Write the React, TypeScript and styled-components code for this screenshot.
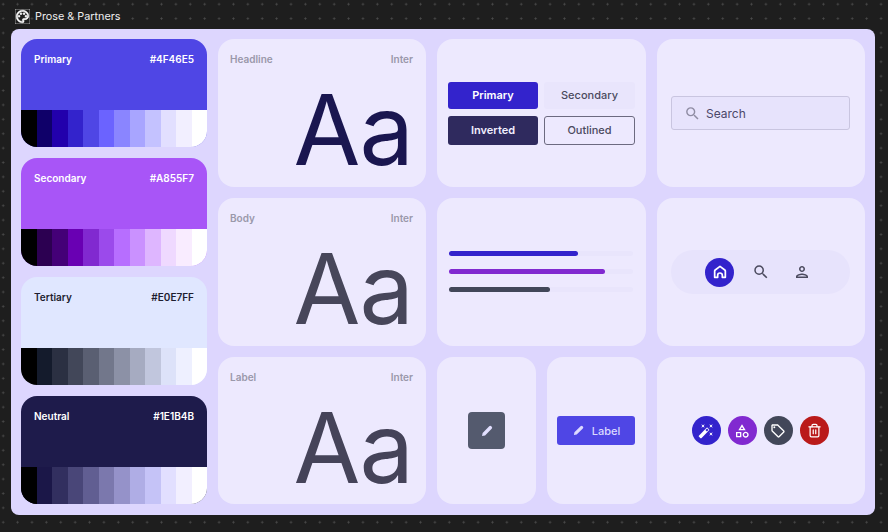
import styled, { createGlobalStyle } from "styled-components";
import { Trash2 } from "lucide-react";
import {
  MdAutoFixHigh,
  MdOutlineCategory,
  MdOutlinePalette,
  MdOutlinePerson,
  MdOutlineSell,
  MdSearch,
} from "react-icons/md";

const GlobalStyle = createGlobalStyle`
  html, body {
    margin: 0;
    padding: 0;
    width: 888px;
    height: 532px;
    overflow: hidden;
    font-family: Inter, "Liberation Sans", sans-serif;
  }
  * {
    box-sizing: border-box;
  }
`;

const Canvas = styled.div`
  width: 888px;
  height: 532px;
  padding: 0 13px 17px 11px;
  display: flex;
  flex-direction: column;
  background-color: #1e1e1e;
  background-image: radial-gradient(circle, #4a4a4a 0.9px, transparent 1.1px);
  background-size: 14.4px 14.4px;
  background-position: -4px -3px;
`;

const FrameLabel = styled.header`
  height: 29px;
  display: flex;
  align-items: center;
  gap: 5px;
  padding: 4px 0 0 4px;
  color: #ededed;
  font-size: 10.8px;
  svg {
    color: #fff;
    stroke: currentColor;
    stroke-width: 0.9px;
  }
`;

const Panel = styled.main`
  flex: 1;
  padding: 10px;
  background: #ddd6fe;
  border-radius: 8px;
  display: grid;
  grid-template-columns: 186px 208px 209px 208px;
  grid-template-rows: 148px 148px 147px;
  gap: 11px;
`;

const PaletteColumn = styled.div`
  grid-row: 1 / span 3;
  display: flex;
  flex-direction: column;
  gap: 11px;
`;

const PaletteCard = styled.div<{ $bg: string; $fg: string }>`
  height: 108px;
  border-radius: 16px;
  overflow: hidden;
  display: flex;
  flex-direction: column;
  background: ${(p) => p.$bg};
  color: ${(p) => p.$fg};
`;

const PaletteHead = styled.div`
  flex: 1;
  padding: 14px 13px 0;
  display: flex;
  justify-content: space-between;
  font-size: 10px;
  line-height: 13px;
  font-weight: 600;
`;

const Tones = styled.div`
  height: 37px;
  display: grid;
  grid-template-columns: repeat(12, 1fr);
`;

const Tone = styled.div<{ $c: string }>`
  background: ${(p) => p.$c};
`;

const Card = styled.section`
  background: #ede9fe;
  border-radius: 16px;
  min-width: 0;
`;

const TypeCard = styled(Card)`
  padding: 14px 13px 0 12px;
  display: flex;
  flex-direction: column;
`;

const TypeHead = styled.div`
  display: flex;
  justify-content: space-between;
  font-size: 10px;
  line-height: 13px;
  font-weight: 600;
  color: #9a98aa;
`;

const Sample = styled.div<{ $c: string }>`
  text-align: right;
  font-size: 97px;
  line-height: 97px;
  margin-top: 15px;
  letter-spacing: -1px;
  color: ${(p) => p.$c};
`;

const ButtonsCard = styled(Card)`
  padding: 0 11px;
  display: grid;
  grid-template-columns: 90px 91px;
  grid-template-rows: 27px 29px;
  column-gap: 6px;
  row-gap: 7px;
  align-content: center;
`;

const Btn = styled.div<{ $bg: string; $fg: string; $line?: string; $strong?: boolean }>`
  display: flex;
  align-items: center;
  justify-content: center;
  font-size: 11px;
  font-weight: ${(p) => (p.$strong ? 600 : 500)};
  border-radius: 3px;
  background: ${(p) => p.$bg};
  color: ${(p) => p.$fg};
  border: ${(p) => (p.$line ? `1px solid ${p.$line}` : "none")};
`;

const CenterCard = styled(Card)`
  display: flex;
  align-items: center;
  justify-content: center;
`;

const SearchBox = styled.div`
  width: 179px;
  height: 34px;
  margin-right: 1px;
  padding-left: 12px;
  display: flex;
  align-items: center;
  gap: 5px;
  background: #e7e3fc;
  border: 1px solid #c9c5e0;
  border-radius: 3px;
  color: #4b4869;
  font-size: 12px;
  svg {
    color: #8f8ca3;
  }
`;

const BarStack = styled(Card)`
  padding: 0 13px 2px 12px;
  display: flex;
  flex-direction: column;
  justify-content: center;
  gap: 13px;
`;

const Track = styled.div`
  height: 5px;
  border-radius: 3px;
  background: #e9e5fc;
`;

const Fill = styled.div<{ $c: string }>`
  height: 100%;
  border-radius: 3px;
  background: ${(p) => p.$c};
`;

const NavPill = styled.nav`
  width: 179px;
  height: 44px;
  margin-right: 1px;
  border-radius: 22px;
  background: #e7e3fc;
  display: flex;
  align-items: center;
  justify-content: center;
  gap: 12px;
`;

const NavItem = styled.div<{ $active?: boolean }>`
  width: 29px;
  height: 29px;
  border-radius: 50%;
  display: flex;
  align-items: center;
  justify-content: center;
  background: ${(p) => (p.$active ? "#3323cc" : "transparent")};
  color: ${(p) => (p.$active ? "#fff" : "#4b4a5e")};
`;

const SplitCell = styled.div`
  display: grid;
  grid-template-columns: 99px 99px;
  gap: 11px;
`;

const IconSquare = styled.div`
  width: 37px;
  height: 37px;
  border-radius: 4px;
  background: #545a6e;
  color: #e2dfff;
  display: flex;
  align-items: center;
  justify-content: center;
`;

const LabelButton = styled.div`
  width: 78px;
  height: 29px;
  margin-right: 1px;
  border-radius: 3px;
  background: #4f46e5;
  color: #dcd9ff;
  font-size: 11px;
  font-weight: 500;
  display: flex;
  align-items: center;
  justify-content: center;
  gap: 7px;
`;

const FabRow = styled.div`
  display: flex;
  gap: 7px;
  margin-right: 2px;
`;

const Fab = styled.div<{ $c: string }>`
  width: 29px;
  height: 29px;
  border-radius: 50%;
  background: ${(p) => p.$c};
  color: #fff;
  display: flex;
  align-items: center;
  justify-content: center;
`;

const palettes = [
  {
    name: "Primary",
    hex: "#4F46E5",
    bg: "#4f46e5",
    fg: "#ffffff",
    tones: ["#000000", "#0f0069", "#2200ac", "#3323cc", "#4f46e5", "#6b63ff", "#8a85ff", "#a8a5ff", "#c4c2ff", "#e2dfff", "#f2efff", "#ffffff"],
  },
  {
    name: "Secondary",
    hex: "#A855F7",
    bg: "#a855f7",
    fg: "#ffffff",
    tones: ["#000000", "#2c0051", "#440077", "#6900b3", "#8129d0", "#9b4aeb", "#b76eff", "#ca91ff", "#deb6ff", "#efd9ff", "#f9ecff", "#ffffff"],
  },
  {
    name: "Tertiary",
    hex: "#E0E7FF",
    bg: "#e0e7ff",
    fg: "#1e1e30",
    tones: ["#000000", "#141b2c", "#2b3042", "#424759", "#5a5f72", "#72778b", "#8c91a6", "#a6abc1", "#c1c6dd", "#dde2f9", "#eef0ff", "#ffffff"],
  },
  {
    name: "Neutral",
    hex: "#1E1B4B",
    bg: "#1e1b4b",
    fg: "#ffffff",
    tones: ["#000000", "#1b1748", "#322f5f", "#494678", "#615e92", "#7b78ad", "#9592c9", "#afade5", "#c5c3f7", "#e2dfff", "#f2efff", "#ffffff"],
  },
];

const bars = [
  { c: "#3323cc", pct: 70 },
  { c: "#8129d0", pct: 85 },
  { c: "#424759", pct: 55 },
];

const samples = [
  { label: "Headline", c: "#1a1650" },
  { label: "Body", c: "#47465a" },
  { label: "Label", c: "#454359" },
];

function HomeIcon() {
  return (
    <svg width="16" height="16" viewBox="0 0 24 24" fill="none" stroke="currentColor" strokeWidth="2.6" strokeLinejoin="round" strokeLinecap="round">
      <path d="M4 20V10.5c0-.6.3-1.1.8-1.5L12 3.5 19.2 9c.5.4.8.9.8 1.5V20h-4.5v-3a3.5 3.5 0 0 0-7 0v3Z" />
    </svg>
  );
}

function PencilIcon({ size }: { size: number }) {
  return (
    <svg width={size} height={size} viewBox="0 0 24 24" fill="currentColor">
      <path d="M3.5 20.5l1-5.2L15.8 4a2.6 2.6 0 0 1 3.7 0l.5.5a2.6 2.6 0 0 1 0 3.7L8.7 19.5Z" />
      <path d="M7.5 16.5 16 8" stroke="#ffffff" strokeOpacity=".25" strokeWidth="1" fill="none" />
    </svg>
  );
}

function TypeSample({ label, c }: { label: string; c: string }) {
  return (
    <TypeCard>
      <TypeHead>
        <span>{label}</span>
        <span>Inter</span>
      </TypeHead>
      <Sample $c={c}>Aa</Sample>
    </TypeCard>
  );
}

export default function App() {
  return (
    <>
      <GlobalStyle />
      <Canvas>
        <FrameLabel>
          <MdOutlinePalette size={15} />
          Prose &amp; Partners
        </FrameLabel>
        <Panel>
          <PaletteColumn>
            {palettes.map((p) => (
              <PaletteCard key={p.name} $bg={p.bg} $fg={p.fg}>
                <PaletteHead>
                  <span>{p.name}</span>
                  <span>{p.hex}</span>
                </PaletteHead>
                <Tones>
                  {p.tones.map((t, i) => (
                    <Tone key={i} $c={t} />
                  ))}
                </Tones>
              </PaletteCard>
            ))}
          </PaletteColumn>

          <TypeSample {...samples[0]} />
          <ButtonsCard>
            <Btn $bg="#3323cc" $fg="#ffffff" $strong>Primary</Btn>
            <Btn $bg="#e9e5fc" $fg="#4b4a5e">Secondary</Btn>
            <Btn $bg="#2f2a5e" $fg="#f2efff" $strong>Inverted</Btn>
            <Btn $bg="transparent" $fg="#4b4a5e" $line="#6c6a80">Outlined</Btn>
          </ButtonsCard>
          <CenterCard>
            <SearchBox>
              <MdSearch size={17} />
              Search
            </SearchBox>
          </CenterCard>

          <TypeSample {...samples[1]} />
          <BarStack>
            {bars.map((b) => (
              <Track key={b.c}>
                <Fill $c={b.c} style={{ width: `${b.pct}%` }} />
              </Track>
            ))}
          </BarStack>
          <CenterCard>
            <NavPill>
              <NavItem $active>
                <HomeIcon />
              </NavItem>
              <NavItem>
                <MdSearch size={18} />
              </NavItem>
              <NavItem>
                <MdOutlinePerson size={18} />
              </NavItem>
            </NavPill>
          </CenterCard>

          <TypeSample {...samples[2]} />
          <SplitCell>
            <CenterCard>
              <IconSquare>
                <PencilIcon size={14} />
              </IconSquare>
            </CenterCard>
            <CenterCard>
              <LabelButton>
                <PencilIcon size={13} />
                Label
              </LabelButton>
            </CenterCard>
          </SplitCell>
          <CenterCard>
            <FabRow>
              <Fab $c="#3323cc">
                <MdAutoFixHigh size={16} />
              </Fab>
              <Fab $c="#8129d0">
                <MdOutlineCategory size={16} />
              </Fab>
              <Fab $c="#424759">
                <MdOutlineSell size={16} />
              </Fab>
              <Fab $c="#ba1a1a">
                <Trash2 size={15} strokeWidth={2} />
              </Fab>
            </FabRow>
          </CenterCard>
        </Panel>
      </Canvas>
    </>
  );
}
